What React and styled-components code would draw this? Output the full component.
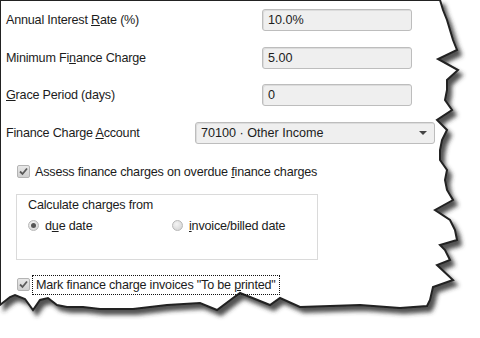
import React from "react";
import styled, { createGlobalStyle } from "styled-components";

const Global = createGlobalStyle`
  html, body { margin: 0; padding: 0; background: #fff; }
  body { font-family: "Liberation Sans", Arial, sans-serif; font-size: 12.6px; color: #1c1c1c; }
`;

const Page = styled.div`
  position: relative;
  width: 480px;
  height: 338px;
  overflow: hidden;
`;

const Paper = styled.svg`
  position: absolute;
  left: 0;
  top: 0;
  z-index: 0;
`;

const Content = styled.div`
  position: relative;
  z-index: 1;
  display: flex;
  flex-direction: column;
  padding: 9px 0 0 6px;
`;

const Fields = styled.div`
  display: flex;
  flex-direction: column;
  gap: 15.6px;
`;

const Row = styled.div`
  display: flex;
  align-items: center;
  height: 22px;
`;

const Label = styled.div`
  width: ${(p) => p.$w}px;
  letter-spacing: -0.2px;
`;

const Field = styled.div`
  box-sizing: border-box;
  width: ${(p) => p.$w}px;
  height: 22px;
  border: 1px solid #bdbdbd;
  border-radius: 3px;
  background: #efefef;
  box-shadow: inset 1px 1px 0 #dcdcdc;
  display: flex;
  align-items: center;
  padding-left: 5px;
  justify-content: space-between;
`;

const Arrow = styled.span`
  width: 0;
  height: 0;
  margin-right: 7px;
  border-left: 4px solid transparent;
  border-right: 4px solid transparent;
  border-top: 4px solid #444;
`;

const Check = styled.div`
  display: flex;
  align-items: center;
  gap: 5px;
  margin-left: 11px;
  margin-top: ${(p) => p.$mt}px;
  height: 14px;
`;

const Box = styled.span`
  box-sizing: border-box;
  width: 13px;
  height: 13px;
  border: 1px solid #b4b4b4;
  border-radius: 2px;
  background: linear-gradient(#e8e8e8, #d0d0d0);
  display: flex;
  align-items: center;
  justify-content: center;
`;

const Focus = styled.span`
  outline: 1px dotted #111;
  outline-offset: 2px;
  padding: 0 1px;
  letter-spacing: -0.2px;
`;

const Text = styled.span`
  letter-spacing: -0.2px;
`;

const Group = styled.div`
  box-sizing: border-box;
  width: 302px;
  height: 66px;
  margin: 15px 0 0 10px;
  border: 1px solid #dadada;
  padding: 3px 0 0 11px;
  display: flex;
  flex-direction: column;
  gap: 7px;
`;

const Radios = styled.div`
  display: flex;
  align-items: center;
`;

const RadioItem = styled.div`
  display: flex;
  align-items: center;
  gap: 6px;
  width: ${(p) => p.$w}px;
`;

const Dot = styled.span`
  box-sizing: border-box;
  width: 11px;
  height: 11px;
  border-radius: 50%;
  border: 1px solid #b8b8b8;
  background: radial-gradient(circle at 40% 35%, #f4f4f4, #cfcfcf);
  display: flex;
  align-items: center;
  justify-content: center;
  &::after {
    content: "";
    width: 5px;
    height: 5px;
    border-radius: 50%;
    background: ${(p) => (p.$on ? "#555" : "transparent")};
  }
`;

const CheckMark = () => (
  <svg width="11" height="11" viewBox="0 0 11 11">
    <path d="M2 5.5 L4.5 8 L9 2.5" fill="none" stroke="#5a5a5a" strokeWidth="1.8" />
  </svg>
);

const edge =
  "M0,0 L440,0 L443,10 L447,20 L450,30 L453,40 L457,50 L438,59 L458,70 L447,80 L447,90 L445,100 L452,110 L437,120 L447,130 L442,140 L440,150 L440,160 L447,170 L445,180 L447,190 L453,200 L435,210 L450,220 L455,230 L457,240 L440,245 L445,250 L450,260 L437,265 L453,280 L433,287 L430,300 L427,306 L400,308 L360,305 L330,306 L300,307 L280,298 L270,305 L240,293 L233,298 L217,310 L200,303 L167,305 L133,309 L100,309 L83,307 L67,307 L57,305 L48,298 L40,300 L33,310 L25,299 L15,295 L10,297 L0,305 Z";

export default function App() {
  return (
    <Page>
      <Global />
      <Paper width="480" height="338">
        <defs>
          <filter id="sh" x="-10%" y="-10%" width="130%" height="130%">
            <feDropShadow dx="4" dy="5" stdDeviation="2.2" floodColor="#333" floodOpacity="0.85" />
          </filter>
        </defs>
        <path d={edge} fill="#fff" stroke="#222" strokeWidth="2" filter="url(#sh)" />
      </Paper>
      <Content>
        <Fields>
          <Row>
            <Label $w={256}>Annual Interest <u>R</u>ate (%)</Label>
            <Field $w={150}>10.0%</Field>
          </Row>
          <Row>
            <Label $w={256}>Minimum Fi<u>n</u>ance Charge</Label>
            <Field $w={150}>5.00</Field>
          </Row>
          <Row>
            <Label $w={256}><u>G</u>race Period (days)</Label>
            <Field $w={150}>0</Field>
          </Row>
          <Row>
            <Label $w={189}>Finance Charge <u>A</u>ccount</Label>
            <Field $w={240}>
              70100 · Other Income
              <Arrow />
            </Field>
          </Row>
        </Fields>
        <Check $mt={21}>
          <Box><CheckMark /></Box>
          <Text>Assess finance charges on overdue <u>f</u>inance charges</Text>
        </Check>
        <Group>
          <Text>Calculate charges from</Text>
          <Radios>
            <RadioItem $w={144}>
              <Dot $on />
              <Text>d<u>u</u>e date</Text>
            </RadioItem>
            <RadioItem $w={140}>
              <Dot />
              <Text><u>i</u>nvoice/billed date</Text>
            </RadioItem>
          </Radios>
        </Group>
        <Check $mt={18}>
          <Box><CheckMark /></Box>
          <Focus>Mark finance charge invoices "To be <u>p</u>rinted"</Focus>
        </Check>
      </Content>
    </Page>
  );
}
